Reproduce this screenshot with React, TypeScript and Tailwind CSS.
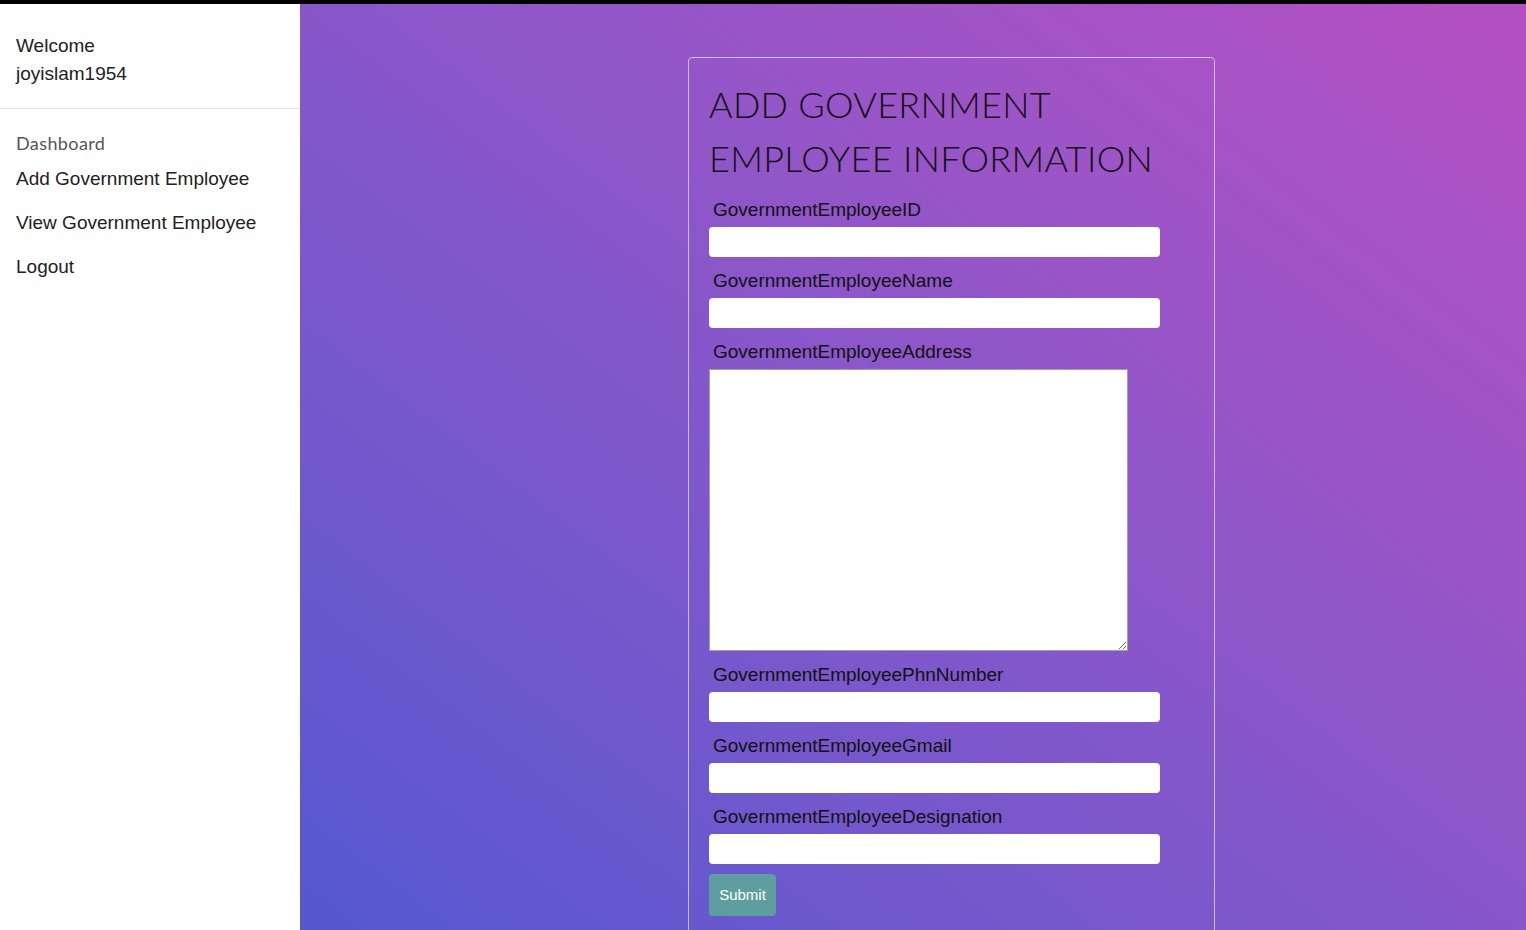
const fields = [
  "GovernmentEmployeeID",
  "GovernmentEmployeeName",
  "GovernmentEmployeeAddress",
  "GovernmentEmployeePhnNumber",
  "GovernmentEmployeeGmail",
  "GovernmentEmployeeDesignation",
];

function Sidebar() {
  return (
    <aside className="w-[300px] shrink-0 bg-white text-[#222] text-[19px] font-['Liberation_Sans',Arial,sans-serif]">
      <div className="pt-[28px] pb-[20px] px-4 leading-[28px] border-b border-[#e6e6e6]">
        <div>Welcome</div>
        <div>joyislam1954</div>
      </div>
      <nav className="pt-[22px] px-4">
        <div className="leading-[24px] text-[18px] text-[#555] font-['Lato',sans-serif] tracking-[0.4px] mb-[11px]">Dashboard</div>
        <div className="flex flex-col gap-[20px] leading-[24px] pt-[1px]">
          <a href="#">Add Government Employee</a>
          <a href="#">View Government Employee</a>
          <a href="#">Logout</a>
        </div>
      </nav>
    </aside>
  );
}

export default function App() {
  return (
    <div className="min-h-screen flex flex-col bg-black pt-[4px]">
      <div className="flex flex-1">
        <Sidebar />
        <main className="flex-1 bg-gradient-to-tr from-[#5458d0] to-[#b54fc3] pl-[388px] pt-[53px]">
          <div className="w-[527px] border border-[#c9c0d8] rounded-[4px] px-[20px] pt-[19px] pb-[20px]">
            <h2 className="font-['Lato',sans-serif] font-light text-[36px] leading-[54px] tracking-[0.3px] text-[#111] uppercase">
              Add Government Employee Information
            </h2>
            <form className="font-['Liberation_Sans',Arial,sans-serif]" onSubmit={(e) => e.preventDefault()}>
              {fields.map((f, i) => (
                <div key={f}>
                  <label className={`block mb-[6px] pl-[4px] text-[19px] leading-[22px] text-[#111] ${i === 0 ? "mt-[14px]" : "mt-[13px]"}`}>{f}</label>
                  {f === "GovernmentEmployeeAddress" ? (
                    <textarea className="block w-[419px] h-[282px] bg-white border border-[#a0a0a0] resize" />
                  ) : (
                    <input className="block w-[451px] h-[30px] bg-white rounded-[4px]" />
                  )}
                </div>
              ))}
              <button className="mt-[10px] w-[67px] h-[42px] bg-[#5f9ea0] text-white text-[15px] rounded-[4px]">
                Submit
              </button>
            </form>
          </div>
        </main>
      </div>
    </div>
  );
}
